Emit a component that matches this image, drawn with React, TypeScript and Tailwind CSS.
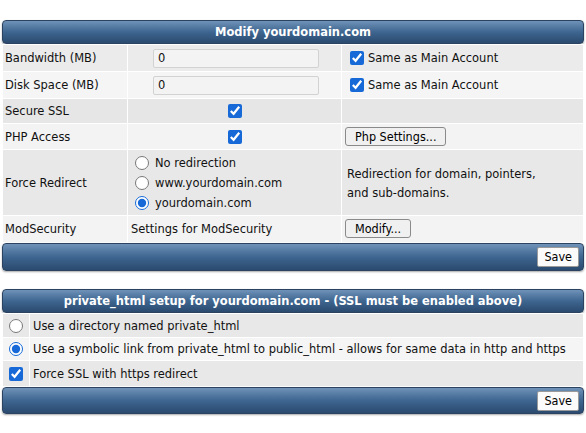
import React from 'react';

const bar =
  'rounded-[4px] border border-[#2b4360] bg-gradient-to-b from-[#6f92b8] via-[#3e6690] to-[#2b4a6f] shadow-[0_1px_2px_rgba(0,0,0,0.35)]';

function SaveBtn() {
  return (
    <button className="h-[20px] rounded-[2px] border border-[#9a9a9a] bg-[#fbfbfb] px-[6px] text-[12.5px] leading-[18px] text-black">
      Save
    </button>
  );
}

function Btn({ children }: { children: React.ReactNode }) {
  return (
    <button className="h-[19px] rounded-[3px] border border-[#8a8a8a] bg-[#f0f0f0] px-[9px] text-[12.5px] leading-[17px] text-black">
      {children}
    </button>
  );
}

function Check() {
  return <input type="checkbox" defaultChecked className="m-0 h-[14px] w-[14px] accent-[#1669d6]" />;
}

function Radio({ checked }: { checked?: boolean }) {
  return <input type="radio" name="r" defaultChecked={checked} className="m-0 h-[14px] w-[14px] accent-[#1669d6]" />;
}

function Radio2({ checked }: { checked?: boolean }) {
  return <input type="radio" name="p" defaultChecked={checked} className="m-0 h-[14px] w-[14px] accent-[#1669d6]" />;
}

export default function App() {
  const td = 'border border-white px-[3px] align-middle';
  return (
    <div className="min-h-screen bg-white text-[12.75px] text-[#111] font-['DejaVu_Sans_Condensed','DejaVu_Sans',sans-serif]">
      <div className="mx-[2px] pt-[20px]">
        <div className={`${bar} flex h-[24px] items-center justify-center font-bold text-white`}>
          Modify yourdomain.com
        </div>
        <table className="w-full table-fixed border-collapse">
          <colgroup>
            <col className="w-[125px]" />
            <col className="w-[214px]" />
            <col />
          </colgroup>
          <tbody>
            <tr className="h-[27px] bg-[#ebebeb]">
              <td className={`${td} pl-[2px]`}>Bandwidth (MB)</td>
              <td className={td}>
                <div className="ml-[22px] flex h-[19px] w-[166px] items-center rounded-[2px] border border-[#d2d2d2] bg-[#f3f3f3] px-[4px]">0</div>
              </td>
              <td className={td}>
                <label className="flex items-center gap-[4px] pl-[5px]">
                  <Check />
                  Same as Main Account
                </label>
              </td>
            </tr>
            <tr className="h-[27px] bg-[#f5f5f5]">
              <td className={`${td} pl-[2px]`}>Disk Space (MB)</td>
              <td className={td}>
                <div className="ml-[22px] flex h-[19px] w-[166px] items-center rounded-[2px] border border-[#d2d2d2] bg-[#f3f3f3] px-[4px]">0</div>
              </td>
              <td className={td}>
                <label className="flex items-center gap-[4px] pl-[5px]">
                  <Check />
                  Same as Main Account
                </label>
              </td>
            </tr>
            <tr className="h-[25px] bg-[#e6e6e6]">
              <td className={`${td} pl-[2px]`}>Secure SSL</td>
              <td className={`${td} text-center`}>
                <div className="flex justify-center">
                  <Check />
                </div>
              </td>
              <td className={td}></td>
            </tr>
            <tr className="h-[26px] bg-[#f3f3f3]">
              <td className={`${td} pl-[2px]`}>PHP Access</td>
              <td className={td}>
                <div className="flex justify-center">
                  <Check />
                </div>
              </td>
              <td className={td}>
                <Btn>Php Settings...</Btn>
              </td>
            </tr>
            <tr className="h-[66px] bg-[#e8e8e8]">
              <td className={`${td} pl-[2px]`}>Force Redirect</td>
              <td className={`${td} pl-[7px]`}>
                <div className="flex flex-col gap-[5px] leading-[15px]">
                  <label className="flex items-center gap-[6px]">
                    <Radio />
                    No redirection
                  </label>
                  <label className="flex items-center gap-[6px]">
                    <Radio />
                    www.yourdomain.com
                  </label>
                  <label className="flex items-center gap-[6px]">
                    <Radio checked />
                    yourdomain.com
                  </label>
                </div>
              </td>
              <td className={`${td} pl-[5px] leading-[19px]`}>
                Redirection for domain, pointers,
                <br />
                and sub-domains.
              </td>
            </tr>
            <tr className="h-[27px] bg-[#f3f3f3]">
              <td className={`${td} pl-[2px]`}>ModSecurity</td>
              <td className={td}>Settings for ModSecurity</td>
              <td className={td}>
                <Btn>Modify...</Btn>
              </td>
            </tr>
          </tbody>
        </table>
        <div className={`${bar} flex h-[28px] items-center justify-end pr-[4px]`}>
          <SaveBtn />
        </div>
      </div>

      <div className="mx-[2px] mt-[18px]">
        <div className={`${bar} flex h-[24px] items-center justify-center font-bold text-white`}>
          private_html setup for yourdomain.com - (SSL must be enabled above)
        </div>
        <table className="w-full table-fixed border-collapse">
          <colgroup>
            <col className="w-[27px]" />
            <col />
          </colgroup>
          <tbody>
            <tr className="h-[24px] bg-[#e8e8e8]">
              <td className={td}>
                <div className="flex justify-center">
                  <Radio2 />
                </div>
              </td>
              <td className={td}>Use a directory named private_html</td>
            </tr>
            <tr className="h-[23px] bg-[#f5f5f5]">
              <td className={td}>
                <div className="flex justify-center">
                  <Radio2 checked />
                </div>
              </td>
              <td className={td}>Use a symbolic link from private_html to public_html - allows for same data in http and https</td>
            </tr>
            <tr className="h-[26px] bg-[#e8e8e8]">
              <td className={td}>
                <div className="flex justify-center">
                  <Check />
                </div>
              </td>
              <td className={td}>Force SSL with https redirect</td>
            </tr>
          </tbody>
        </table>
        <div className={`${bar} flex h-[27px] items-center justify-end pr-[4px]`}>
          <SaveBtn />
        </div>
      </div>
    </div>
  );
}
